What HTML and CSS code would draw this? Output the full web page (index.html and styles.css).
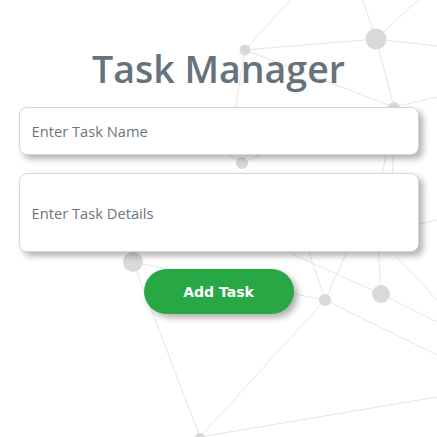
FILE: index.html
```html
<!DOCTYPE html>
<html>
<head>
<meta charset="utf-8">
<link rel="stylesheet" href="styles.css">
</head>
<body>
<svg class="network" width="437" height="437" viewBox="0 0 437 437">
  <g class="links">
    <line x1="245" y1="50" x2="290" y2="0"/>
    <line x1="245" y1="50" x2="376" y2="39"/>
    <line x1="245" y1="50" x2="235" y2="110"/>
    <line x1="245" y1="50" x2="394" y2="107"/>
    <line x1="376" y1="39" x2="363" y2="0"/>
    <line x1="376" y1="39" x2="418" y2="0"/>
    <line x1="376" y1="39" x2="437" y2="46"/>
    <line x1="376" y1="39" x2="394" y2="107"/>
    <line x1="394" y1="107" x2="437" y2="97"/>
    <line x1="394" y1="107" x2="378" y2="200"/>
    <line x1="394" y1="107" x2="392" y2="200"/>
    <line x1="195" y1="135" x2="242" y2="163"/>
    <line x1="242" y1="163" x2="300" y2="138"/>
    <line x1="400" y1="228" x2="437" y2="220"/>
    <line x1="133" y1="262" x2="200" y2="437"/>
    <line x1="133" y1="262" x2="325" y2="300"/>
    <line x1="325" y1="300" x2="200" y2="437"/>
    <line x1="325" y1="300" x2="437" y2="355"/>
    <line x1="200" y1="437" x2="437" y2="397"/>
    <line x1="300" y1="225" x2="325" y2="300"/>
    <line x1="350" y1="245" x2="325" y2="300"/>
    <line x1="378" y1="240" x2="381" y2="294"/>
    <line x1="290" y1="253" x2="381" y2="294"/>
    <line x1="395" y1="255" x2="437" y2="300"/>
    <line x1="381" y1="294" x2="437" y2="322"/>
  </g>
  <g class="nodes">
    <circle cx="245" cy="50" r="5.5"/>
    <circle cx="376" cy="39" r="10.5"/>
    <circle cx="394" cy="108" r="6"/>
    <circle cx="242" cy="163" r="6"/>
    <circle cx="133" cy="262" r="10"/>
    <circle cx="325" cy="300" r="6"/>
    <circle cx="381" cy="294" r="9"/>
    <circle cx="200" cy="438" r="5"/>
  </g>
</svg>
<main class="app">
  <h1 class="title">Task Manager</h1>
  <input class="field field-name" type="text" placeholder="Enter Task Name">
  <input class="field field-details" type="text" placeholder="Enter Task Details">
  <button class="add-btn" type="button">Add Task</button>
</main>
</body>
</html>
```
FILE: styles.css
```css
html, body {
  margin: 0;
  padding: 0;
  background: #ffffff;
  width: 437px;
  height: 437px;
  overflow: hidden;
}
body {
  position: relative;
  font-family: "Open Sans", "Liberation Sans", sans-serif;
}
.network {
  position: absolute;
  left: 0;
  top: 0;
  z-index: 0;
}
.network .links line {
  stroke: #e6e6e6;
  stroke-width: 1;
}
.network .nodes circle {
  fill: #d9d9d9;
}
.app {
  position: relative;
  z-index: 1;
  width: 400px;
  margin: 0 auto;
  padding-top: 43px;
  display: flex;
  flex-direction: column;
  align-items: center;
}
.title {
  margin: 0 0 12px 0;
  font-family: "Open Sans", sans-serif;
  font-weight: 600;
  font-size: 37.5px;
  line-height: 52px;
  color: #67737c;
}
.field {
  box-sizing: border-box;
  width: 400px;
  border: 1px solid #d6d6d6;
  border-radius: 8px;
  background: #ffffff;
  box-shadow: 4px 4px 6px rgba(0, 0, 0, 0.3);
  padding: 0 12px;
  font-family: "Open Sans", sans-serif;
  font-size: 14.7px;
  color: #495057;
  outline: none;
}
.field::placeholder {
  color: #6c757d;
}
.field-name {
  height: 48px;
  margin-bottom: 18px;
}
.field-details {
  height: 79px;
  margin-bottom: 17px;
}
.add-btn {
  width: 150px;
  height: 45px;
  border: none;
  border-radius: 23px;
  background: #28a745;
  color: #ffffff;
  font-family: "DejaVu Sans", Verdana, sans-serif;
  font-weight: bold;
  font-size: 14px;
  box-shadow: 4px 4px 6px rgba(0, 0, 0, 0.3);
  cursor: pointer;
}
```
